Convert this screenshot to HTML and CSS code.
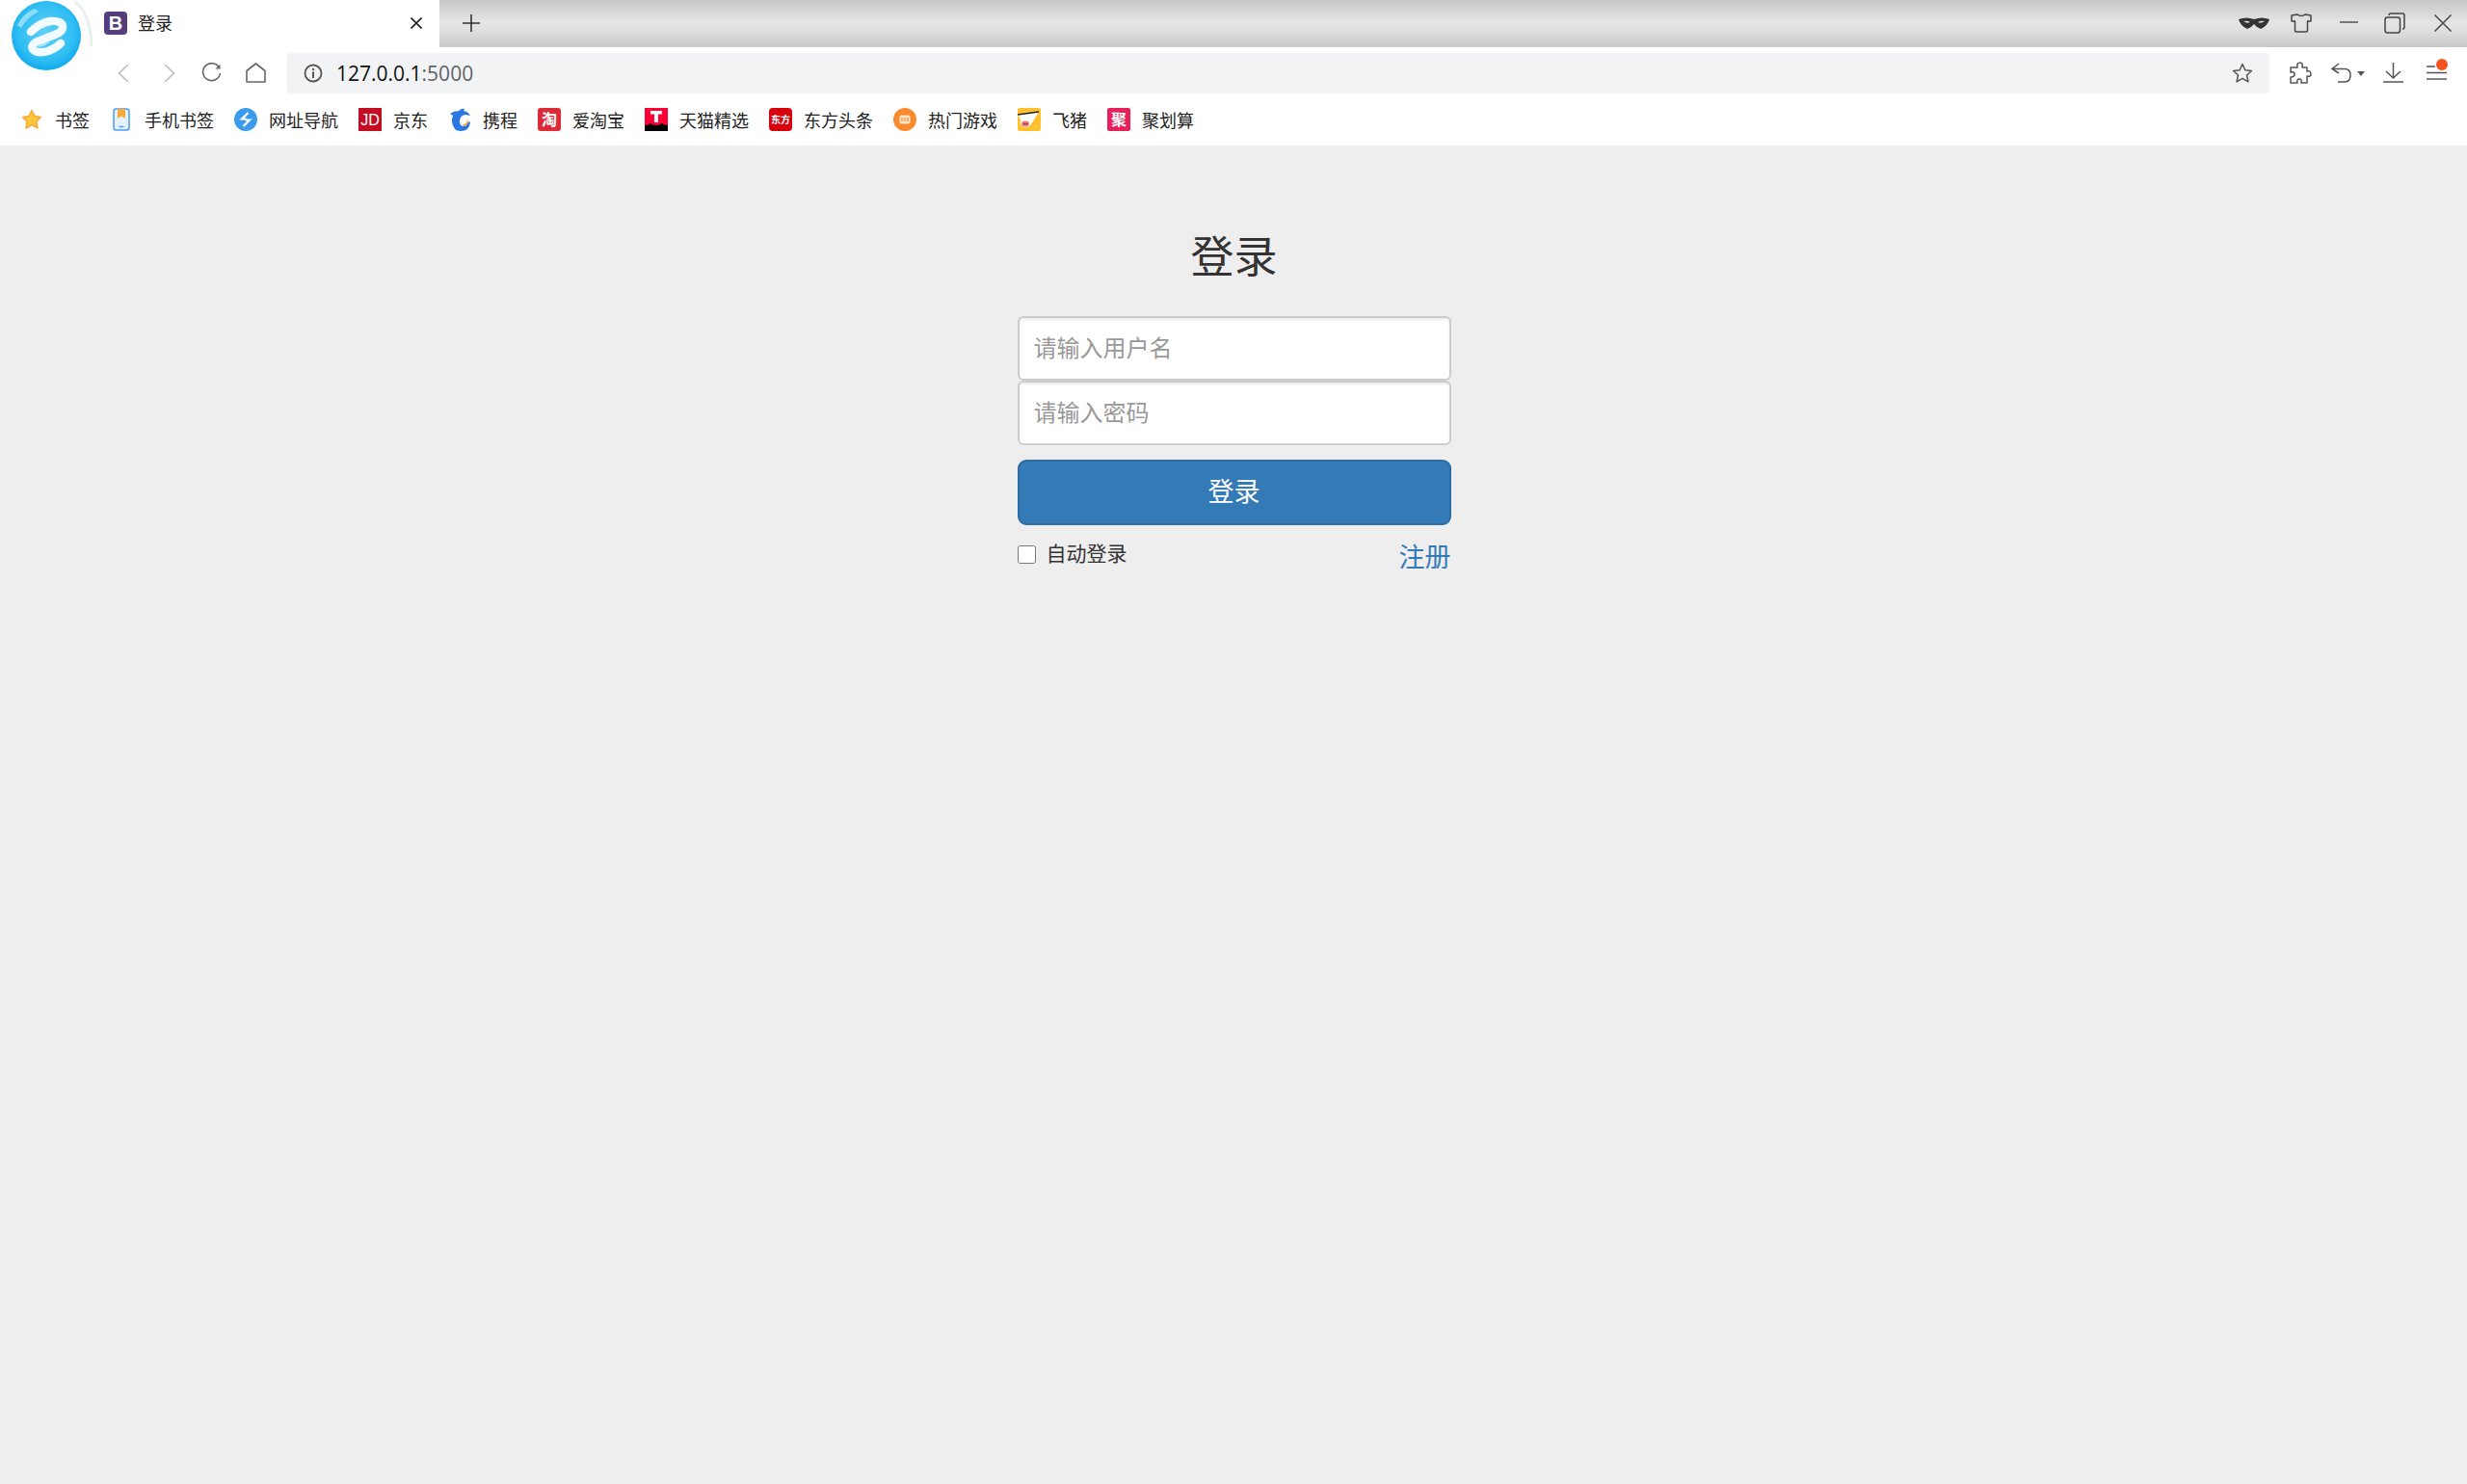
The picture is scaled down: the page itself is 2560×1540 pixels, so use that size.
FILE: index.html
```html
<!DOCTYPE html>
<html lang="zh-CN">

<head>
    <meta charset="UTF-8">
    <title>登录</title>
    <link rel="stylesheet" href="styles.css">
</head>

<body>
    <!-- browser logo sits over the tab strip -->
    <svg class="logo" width="96" height="80" viewBox="0 0 96 80">
        <defs>
            <radialGradient id="logoBlue" cx="50%" cy="45%" r="55%">
                <stop offset="0" stop-color="#5fd0f7" />
                <stop offset="0.75" stop-color="#2fbdf3" />
                <stop offset="1" stop-color="#0fa9ee" />
            </radialGradient>
        </defs>
        <circle cx="48" cy="38" r="42" fill="#fff" />
        <path d="M78 2 Q94 14 95 48" fill="none" stroke="#dfe9ea" stroke-width="3" opacity="0.7" />
        <circle cx="48" cy="37" r="36" fill="url(#logoBlue)" />
        <path d="M18 26 Q24 14 36 9 L40 12 Q28 18 22 29Z" fill="#8fdcf8" />
        <path d="M32 33 Q41 24 52 22 Q65 21 65 28 Q65 33 57 36 L37 44 Q31 48 35 52 Q40 56 50 53 Q58 50 63 45" fill="none" stroke="#f2fbff" stroke-width="8.500" stroke-linecap="round" stroke-linejoin="round" />
        <path d="M38 47 Q47 45 54 41 Q48 48 40 49Z" fill="#a9e3f8" />
    </svg>

    <div class="tabstrip">
        <div class="tab">
            <svg class="favicon" width="24" height="24" viewBox="0 0 24 24">
                <rect width="24" height="24" rx="4" fill="#563d7c" />
                <text x="12" y="19" text-anchor="middle" class="favicon-b">B</text>
            </svg>
            <span class="tab-title">登录</span>
            <svg class="tab-close" width="12" height="12" viewBox="0 0 12 12">
                <path d="M0.5 0.5L11.5 11.5M11.5 0.5L0.5 11.5" stroke="#222" stroke-width="1.6" fill="none" />
            </svg>
        </div>
        <svg class="new-tab" width="18" height="18" viewBox="0 0 18 18">
            <path d="M9 0V18M0 9H18" stroke="#333" stroke-width="1.6" fill="none" />
        </svg>
        <div class="window-btns">
            <svg class="btn-mask" width="32" height="14" viewBox="0 0 32 14">
                <path d="M0 3 Q8 0 16 3 Q24 0 32 3 Q30 10 23 13 Q18 11 16 8 Q14 11 9 13 Q2 10 0 3Z" fill="#333" />
                <path d="M5 5 Q9 4 12 6 Q9 8 5 5ZM27 5 Q23 4 20 6 Q23 8 27 5Z" fill="#ddd" />
            </svg>
            <svg class="btn-shirt" width="22" height="20" viewBox="0 0 22 20">
                <path d="M1 2 L7 1 Q11 4 15 1 L21 2 V8 L17.500 8 V17.500 Q17.500 19 16 19 H6 Q4.500 19 4.500 17.500 V8 L1 8Z" fill="none" stroke="#444" stroke-width="1.500" stroke-linejoin="round" />
            </svg>
            <svg class="btn-min" width="19" height="2" viewBox="0 0 19 2">
                <path d="M0 1H19" stroke="#555" stroke-width="1.500" />
            </svg>
            <svg class="btn-restore" width="22" height="22" viewBox="0 0 22 22">
                <rect x="1" y="5" width="15.500" height="16" rx="2.500" fill="none" stroke="#444" stroke-width="1.500" />
                <path d="M5 3 Q5 1 7 1 H19 Q21 1 21 3 V15 Q21 17 19 17" fill="none" stroke="#444" stroke-width="1.500" />
            </svg>
            <svg class="btn-close" width="18" height="18" viewBox="0 0 18 18">
                <path d="M0.500 0.500L17.500 17.500M17.500 0.500L0.500 17.500" stroke="#444" stroke-width="1.500" fill="none" />
            </svg>
        </div>
    </div>

    <div class="toolbar">
        <svg class="nav-back" width="12" height="20" viewBox="0 0 12 20">
            <path d="M11 1L1.500 10L11 19" fill="none" stroke="#bbb" stroke-width="1.600" />
        </svg>
        <svg class="nav-forward" width="12" height="20" viewBox="0 0 12 20">
            <path d="M1 1L10.500 10L1 19" fill="none" stroke="#bbb" stroke-width="1.600" />
        </svg>
        <svg class="nav-reload" width="21" height="21" viewBox="0 0 21 21">
            <path d="M18 4.500A9 9 0 1 0 19.500 11" fill="none" stroke="#666" stroke-width="1.600" />
            <path d="M19.500 1.500V6.500H14.500Z" fill="#666" />
        </svg>
        <svg class="nav-home" width="21" height="21" viewBox="0 0 21 21">
            <path d="M1 8.500L10.500 1L20 8.500V20H1Z" fill="none" stroke="#666" stroke-width="1.600" stroke-linejoin="round" />
        </svg>
        <div class="addressbar">
            <svg class="info" width="20" height="20" viewBox="0 0 20 20">
                <circle cx="10" cy="10" r="8.500" fill="none" stroke="#555" stroke-width="1.800" />
                <path d="M10 8.500V15" stroke="#555" stroke-width="2" />
                <circle cx="10" cy="6" r="1.200" fill="#555" />
            </svg>
            <span class="url">127.0.0.1<span class="url-port">:5000</span></span>
            <svg class="addr-star" width="22" height="22" viewBox="0 0 22 22">
                <path d="M11 1.500L13.800 7.800L20.500 8.500L15.500 13L17 19.800L11 16.300L5 19.800L6.500 13L1.500 8.500L8.200 7.800Z" fill="none" stroke="#555" stroke-width="1.500" stroke-linejoin="round" />
            </svg>
        </div>
        <svg class="tool-ext" width="24" height="24" viewBox="0 0 24 24">
            <path d="M9 6 Q8 1 12 1 Q15 1 14 6 H19 V10 Q23 9 23 13 Q23 16 19 15 V22 H13 Q14 18 11 18 Q8 18 9 22 H2 V16 Q6 16 6 13 Q6 10 2 11 V6Z" fill="none" stroke="#555" stroke-width="1.500" stroke-linejoin="round" />
        </svg>
        <svg class="tool-undo" width="36" height="22" viewBox="0 0 36 22">
            <path d="M8 1L1 6.500L8 11M1 6.500H14 Q20 6.500 20 13 Q20 20 14 20 H7" fill="none" stroke="#555" stroke-width="1.500" />
            <path d="M27 9H35L31 14Z" fill="#555" />
        </svg>
        <svg class="tool-download" width="21" height="21" viewBox="0 0 21 21">
            <path d="M10.500 0V16M3 9L10.500 16L18 9M0 20H21" fill="none" stroke="#555" stroke-width="1.500" />
        </svg>
        <svg class="tool-menu" width="24" height="24" viewBox="0 0 24 24">
            <path d="M1 8H10M1 14.500H22M1 21H22" stroke="#555" stroke-width="1.500" fill="none" />
            <circle cx="17" cy="6" r="6" fill="#f4511e" />
        </svg>
    </div>

    <div class="bookmarks">
        <a class="bm" href="#">
            <svg class="bm-icon" viewBox="0 0 24 24">
                <path d="M12 2.500L15 8.500L21.500 9.500L17 14L18 21L12 17.500L6 21L7 14L2.500 9.500L9 8.500Z" fill="#ffc53d" stroke="#f9a83a" stroke-width="1.500" stroke-linejoin="round" />
            </svg>
            书签
        </a>
        <a class="bm" href="#">
            <svg class="bm-icon" viewBox="0 0 24 24">
                <rect x="4" y="1" width="16" height="22" rx="2.500" fill="#e4f1ff" stroke="#4a9df0" stroke-width="1.500" />
                <path d="M8 1H16V11L12 8.500L8 11Z" fill="#f7a93b" />
                <path d="M9.500 19.500H14.500" stroke="#4a9df0" stroke-width="1.500" />
            </svg>
            手机书签
        </a>
        <a class="bm" href="#">
            <svg class="bm-icon" viewBox="0 0 24 24">
                <circle cx="12" cy="12" r="12" fill="#3d9bee" />
                <path d="M14.500 5L8 11.500H12.500M9.500 19L16 12.500H11.500" fill="none" stroke="#fff" stroke-width="2.200" />
            </svg>
            网址导航
        </a>
        <a class="bm" href="#">
            <svg class="bm-icon" viewBox="0 0 24 24">
                <rect width="24" height="24" fill="#c30d23" />
                <text x="12" y="18" text-anchor="middle" class="logo-jd">JD</text>
            </svg>
            京东
        </a>
        <a class="bm" href="#">
            <svg class="bm-icon" viewBox="0 0 24 24">
                <path d="M2 6 Q6 3 11 3 Q14 0 17 1 L16 3 Q21 4 23 8 L18 7 Q12 8 12 14 Q12 19 16 19 Q20 19 21 14 L23 15 Q22 24 13 24 Q5 24 4 14 Q4 10 5 8Z" fill="#2b78e4" />
                <path d="M15 17 Q20 17 20 11 Q22 17 17 19 Q15 19 15 17Z" fill="#f6a13a" />
            </svg>
            携程
        </a>
        <a class="bm" href="#">
            <svg class="bm-icon" viewBox="0 0 24 24">
                <rect width="24" height="24" rx="3" fill="#dc2a38" />
                <text x="12" y="17.500" text-anchor="middle" class="logo-cn">淘</text>
            </svg>
            爱淘宝
        </a>
        <a class="bm" href="#">
            <svg class="bm-icon" viewBox="0 0 24 24">
                <rect width="24" height="24" fill="#ff0036" />
                <path d="M0 18 Q4 18 6 16 Q12 20 18 16 Q20 18 24 18 V24 H0Z" fill="#000" />
                <path d="M6 3H18V6.500H14V15H10V6.500H6Z" fill="#fff" />
            </svg>
            天猫精选
        </a>
        <a class="bm" href="#">
            <svg class="bm-icon" viewBox="0 0 24 24">
                <rect width="24" height="24" rx="4" fill="#d8000c" />
                <text x="12" y="16" text-anchor="middle" class="logo-east">东方</text>
            </svg>
            东方头条
        </a>
        <a class="bm" href="#">
            <svg class="bm-icon" viewBox="0 0 24 24">
                <circle cx="12" cy="12" r="12" fill="#fa8a2d" />
                <rect x="6.500" y="7.500" width="11" height="9" rx="1.500" fill="#fde2c4" />
                <path d="M9 10V14M12 10V14M15 10V14" stroke="#fa8a2d" stroke-width="1.200" />
            </svg>
            热门游戏
        </a>
        <a class="bm" href="#">
            <svg class="bm-icon" viewBox="0 0 24 24">
                <rect width="24" height="24" rx="2" fill="#ffc22e" />
                <path d="M0 7 L22 4 L14 17 Q11 21 6 20 Q2 18 3 12Z" fill="#fff" />
                <path d="M0 7 L22 4" stroke="#222" stroke-width="1.500" />
                <ellipse cx="8" cy="16.500" rx="4" ry="3" fill="#f0736f" />
                <circle cx="7" cy="16.500" r="0.700" fill="#222" />
                <circle cx="9.500" cy="16.500" r="0.700" fill="#222" />
            </svg>
            飞猪
        </a>
        <a class="bm" href="#">
            <svg class="bm-icon" viewBox="0 0 24 24">
                <rect width="24" height="24" rx="2" fill="#e6205a" />
                <text x="12" y="17.500" text-anchor="middle" class="logo-cn">聚</text>
            </svg>
            聚划算
        </a>
    </div>

    <div class="page">
        <form class="signin">
            <h2 class="signin-heading">登录</h2>
            <input class="form-control first" type="text" placeholder="请输入用户名">
            <input class="form-control second" type="password" placeholder="请输入密码">
            <button class="btn-signin" type="button">登录</button>
            <div class="signin-foot">
                <label class="remember"><input type="checkbox"><span>自动登录</span></label>
                <a class="register" href="#">注册</a>
            </div>
        </form>
    </div>
</body>

</html>
```

FILE: styles.css
```css
html,
body {
    margin: 0;
    height: 100%;
}

body {
    background: #eeeeee;
    color: #333;
    font-family: "Noto Sans CJK SC", "Liberation Sans", sans-serif;
    display: flex;
    flex-direction: column;
    min-height: 1540px;
    position: relative;
}

svg {
    display: block;
    flex: none;
}

.logo {
    position: absolute;
    top: 0;
    left: 0;
    z-index: 2;
}

/* tab strip */
.tabstrip {
    height: 49px;
    box-sizing: border-box;
    padding-bottom: 1px;
    display: flex;
    align-items: center;
    background: linear-gradient(#c6c6c6, #e4e4e4 45%, #e2e2e2 60%, #c9c9c9);
}

.tab {
    width: 456px;
    height: 49px;
    margin-bottom: -1px;
    box-sizing: border-box;
    padding-left: 108px;
    padding-bottom: 1px;
    background: #fff;
    display: flex;
    align-items: center;
    flex: none;
}

.favicon-b {
    font-family: "Liberation Sans", sans-serif;
    font-weight: 700;
    font-size: 20px;
    fill: #fff;
}

.tab-title {
    margin-left: 11px;
    margin-top: -3px;
    font-size: 18px;
    color: #222;
}

.tab-close {
    margin-left: auto;
    margin-right: 18px;
}

.new-tab {
    margin-left: 24px;
}

.window-btns {
    margin-left: auto;
    display: flex;
    align-items: center;
    padding-right: 16px;
}

.btn-shirt {
    margin-left: 22px;
}

.btn-min {
    margin-left: 29px;
    margin-top: -2px;
}

.btn-restore {
    margin-left: 27px;
    margin-top: -1px;
}

.btn-close {
    margin-left: 30px;
}

/* toolbar */
.toolbar {
    height: 51px;
    box-sizing: border-box;
    padding-top: 2px;
    background: #fff;
    display: flex;
    align-items: center;
    padding-left: 122px;
    padding-right: 22px;
}

.nav-forward {
    margin-left: 36px;
}

.nav-reload {
    margin-left: 27px;
}

.nav-home {
    margin-left: 25px;
}

.addressbar {
    margin-left: 22px;
    width: 2057px;
    height: 42px;
    margin-top: 1px;
    box-sizing: border-box;
    padding-left: 17px;
    padding-right: 17px;
    background: #f1f3f4;
    border-radius: 4px;
    display: flex;
    align-items: center;
    flex: none;
}

.url {
    margin-left: 14px;
    font-family: "Open Sans", sans-serif;
    font-size: 21px;
    color: #111;
}

.url-port {
    color: #5f6368;
}

.addr-star {
    margin-left: auto;
}

.tool-ext {
    margin-left: 20px;
}

.tool-undo {
    margin-left: 20px;
}

.tool-download {
    margin-left: 18px;
}

.tool-menu {
    margin-left: 23px;
    margin-top: -5px;
}

/* bookmarks */
.bookmarks {
    height: 51px;
    box-sizing: border-box;
    padding-bottom: 3px;
    background: #fff;
    display: flex;
    align-items: center;
    padding-left: 21px;
    gap: 21px;
}

.bm {
    display: flex;
    align-items: center;
    gap: 12px;
    font-size: 18px;
    color: #222;
    text-decoration: none;
    line-height: 24px;
}

.bm-icon {
    width: 24px;
    height: 24px;
}

.logo-jd {
    font-family: "Liberation Sans", sans-serif;
    font-size: 16px;
    fill: #fff;
}

.logo-cn {
    font-weight: 700;
    font-size: 16px;
    fill: #fff;
}

.logo-east {
    font-weight: 700;
    font-size: 10px;
    fill: #fff;
}

/* login form */
.page {
    flex: 1;
    background: #eeeeee;
    padding-left: 1px;
}

.signin {
    width: 450px;
    margin: 0 auto;
}

.signin-heading {
    margin: 0;
    padding-top: 80px;
    padding-bottom: 31px;
    font-size: 45px;
    line-height: 66px;
    font-weight: 400;
    text-align: center;
}

.form-control {
    display: block;
    width: 100%;
    height: 67px;
    box-sizing: border-box;
    padding: 0 15px 4px;
    border: 2px solid #ccc;
    border-radius: 6px;
    background: #fff;
    box-shadow: inset 0 2px 2px rgba(0, 0, 0, 0.075);
    font-family: inherit;
    font-size: 24px;
    color: #555;
    outline: none;
}

.form-control::placeholder {
    color: #999;
}

.form-control.second {
    margin-bottom: 15px;
}

.btn-signin {
    display: block;
    width: 100%;
    height: 68px;
    padding: 0 0 5px;
    border: 2px solid #2e6da4;
    border-radius: 9px;
    background: #337ab7;
    color: #fff;
    font-family: inherit;
    font-size: 27px;
}

.signin-foot {
    display: flex;
    justify-content: space-between;
    align-items: flex-start;
    margin-top: 15px;
}

.remember {
    display: flex;
    align-items: flex-start;
    font-size: 21px;
    line-height: 26px;
}

.remember input {
    width: 19px;
    height: 19px;
    margin: 6px 11px 0 0;
}

.register {
    font-size: 27px;
    line-height: 34px;
    color: #337ab7;
    text-decoration: none;
}
```
